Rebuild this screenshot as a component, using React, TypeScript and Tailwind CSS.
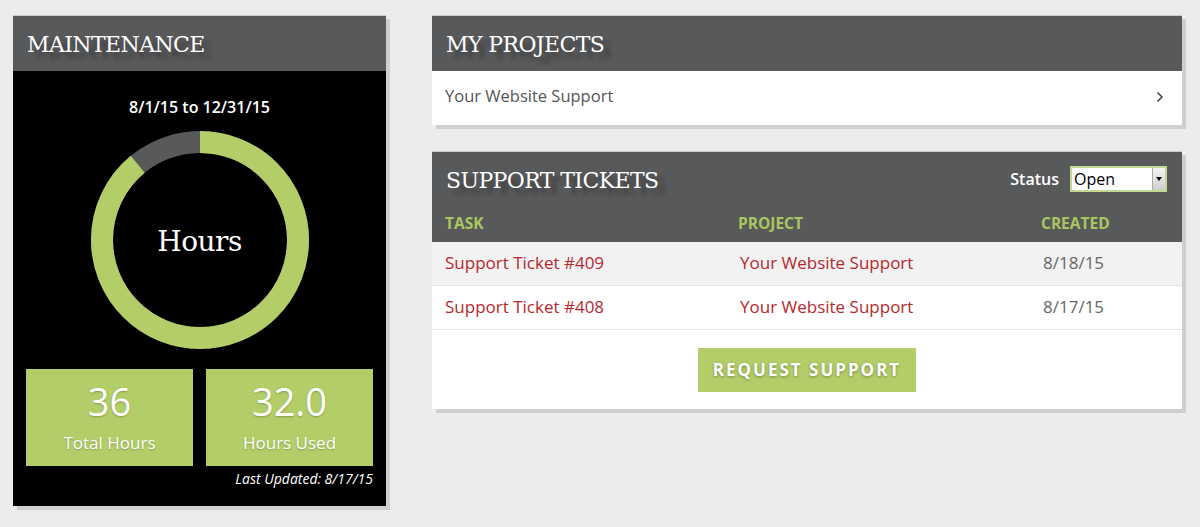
import { ChevronRight } from 'lucide-react';

const SLAB = "font-['DejaVu_Serif',serif]";
const SANS = "font-['Open_Sans','Lato',sans-serif]";

interface Ticket {
  task: string;
  project: string;
  created: string;
}

const TICKETS: Ticket[] = [
  { task: 'Support Ticket #409', project: 'Your Website Support', created: '8/18/15' },
  { task: 'Support Ticket #408', project: 'Your Website Support', created: '8/17/15' },
];

function CardHeader({ title, children }: { title: string; children?: React.ReactNode }) {
  return (
    <div className="h-[56px] bg-[#58595b] border-t border-[#c9c9c9] flex items-center justify-between pl-[14px] pr-[15px]">
      <h2
        className={`${SLAB} text-white text-[22px] tracking-[-0.6px] pt-[1px] [text-shadow:7px_6px_4px_rgba(0,0,0,0.35)]`}
      >
        {title}
      </h2>
      {children}
    </div>
  );
}

function Donut({ total, used }: { total: number; used: number }) {
  const r = 98;
  const c = 2 * Math.PI * r;
  const frac = used / total;
  return (
    <div className="relative w-[218px] h-[218px]">
      <svg width="218" height="218" viewBox="0 0 218 218">
        <circle cx="109" cy="109" r={r} fill="none" stroke="#58595b" strokeWidth="22" />
        <circle
          cx="109"
          cy="109"
          r={r}
          fill="none"
          stroke="#b3ce68"
          strokeWidth="22"
          strokeDasharray={`${c * frac} ${c}`}
          transform="rotate(-90 109 109)"
        />
      </svg>
      <div
        className={`${SLAB} absolute inset-0 flex items-center justify-center text-white text-[28px] tracking-[-0.5px] pt-[3px]`}
      >
        Hours
      </div>
    </div>
  );
}

function StatBox({ value, label }: { value: string; label: string }) {
  return (
    <div
      className={`${SANS} bg-[#b3ce68] h-[97px] flex flex-col items-center text-white [text-shadow:0_1px_2px_rgba(0,0,0,0.25)]`}
    >
      <div className="text-[38px] leading-none mt-[13px]">{value}</div>
      <div className="text-[17px] leading-none mt-[14px]">{label}</div>
    </div>
  );
}

function MaintenanceCard() {
  return (
    <div className="w-[373px] h-[491px] bg-black shadow-[4px_4px_0_#cfcfcf] flex flex-col shrink-0">
      <CardHeader title="MAINTENANCE" />
      <div className="flex-1 flex flex-col items-center px-[13px]">
        <div className={`${SANS} text-white font-semibold text-[16px] mt-[24px]`}>8/1/15 to 12/31/15</div>
        <div className="mt-[12px]">
          <Donut total={36} used={32} />
        </div>
        <div className="grid grid-cols-2 gap-[13px] w-full mt-[20px]">
          <StatBox value="36" label="Total Hours" />
          <StatBox value="32.0" label="Hours Used" />
        </div>
        <div className={`${SANS} self-end italic text-white text-[14px] mt-[2px]`}>
          Last Updated: 8/17/15
        </div>
      </div>
    </div>
  );
}

function ProjectsCard() {
  return (
    <div className="bg-white shadow-[4px_4px_0_#cfcfcf]">
      <CardHeader title="MY PROJECTS" />
      <div className={`${SANS} h-[54px] flex items-center justify-between pl-[13px] pr-[14px] text-[#555] text-[16.5px] pb-[3px]`}>
        <span>Your Website Support</span>
        <ChevronRight size={16} strokeWidth={2.5} className="text-[#444]" />
      </div>
    </div>
  );
}

function StatusSelect() {
  return (
    <div className={`${SANS} flex items-center gap-[11px]`}>
      <span className="text-white text-[16px] font-semibold">Status</span>
      <div className="w-[97px] h-[26px] bg-white border-2 border-[#c3d993] flex items-center justify-between">
        <span className="text-black text-[16px] pl-[2px] leading-none">Open</span>
        <div className="w-[13px] h-full bg-gradient-to-b from-[#f4f4f4] to-[#cfcfcf] border-l border-[#aaa] flex items-center justify-center">
          <div className="w-0 h-0 border-l-[3px] border-r-[3px] border-t-[4px] border-l-transparent border-r-transparent border-t-black" />
        </div>
      </div>
    </div>
  );
}

function TicketsCard() {
  return (
    <div className="bg-white shadow-[4px_4px_0_#cfcfcf]">
      <div className="bg-[#58595b] border-t border-[#c9c9c9]">
        <div className="h-[53px] flex items-center justify-between pl-[14px] pr-[15px] pt-[1px]">
          <h2
            className={`${SLAB} text-white text-[22px] tracking-[-0.6px] mt-[2px] [text-shadow:7px_6px_4px_rgba(0,0,0,0.35)]`}
          >
            SUPPORT TICKETS
          </h2>
          <StatusSelect />
        </div>
        <div
          className={`${SANS} grid grid-cols-[293px_303px_1fr] h-[37px] items-center pl-[13px] text-[#a9c75e] font-bold text-[15.5px] pt-[1px]`}
        >
          <span>TASK</span>
          <span>PROJECT</span>
          <span>CREATED</span>
        </div>
      </div>
      {TICKETS.map((t, i) => (
        <div
          key={t.task}
          className={[
            `${SANS} grid grid-cols-[295px_303px_1fr] h-[44px] items-center pl-[13px] text-[17px] border-b border-[#e6e6e6] pb-[2px]`,
            i % 2 === 0 ? 'bg-[#f2f2f2]' : 'bg-white',
          ].join(' ')}
        >
          <span className="text-[#b5292e]">{t.task}</span>
          <span className="text-[#b5292e]">{t.project}</span>
          <span className="text-[#666]">{t.created}</span>
        </div>
      ))}
      <div className="h-[79px] flex items-start justify-center pt-[18px]">
        <button
          type="button"
          className={`${SANS} w-[218px] h-[44px] bg-[#b3ce68] text-white font-bold text-[17px] tracking-[2px] [text-shadow:0_1px_3px_rgba(0,0,0,0.35)]`}
        >
          REQUEST SUPPORT
        </button>
      </div>
    </div>
  );
}

export default function App() {
  return (
    <div className="w-[1200px] h-[527px] bg-[#ececec] flex items-start gap-[46px] pl-[13px] pt-[15px]">
      <MaintenanceCard />
      <div className="w-[750px] flex flex-col gap-[26px]">
        <ProjectsCard />
        <TicketsCard />
      </div>
    </div>
  );
}
